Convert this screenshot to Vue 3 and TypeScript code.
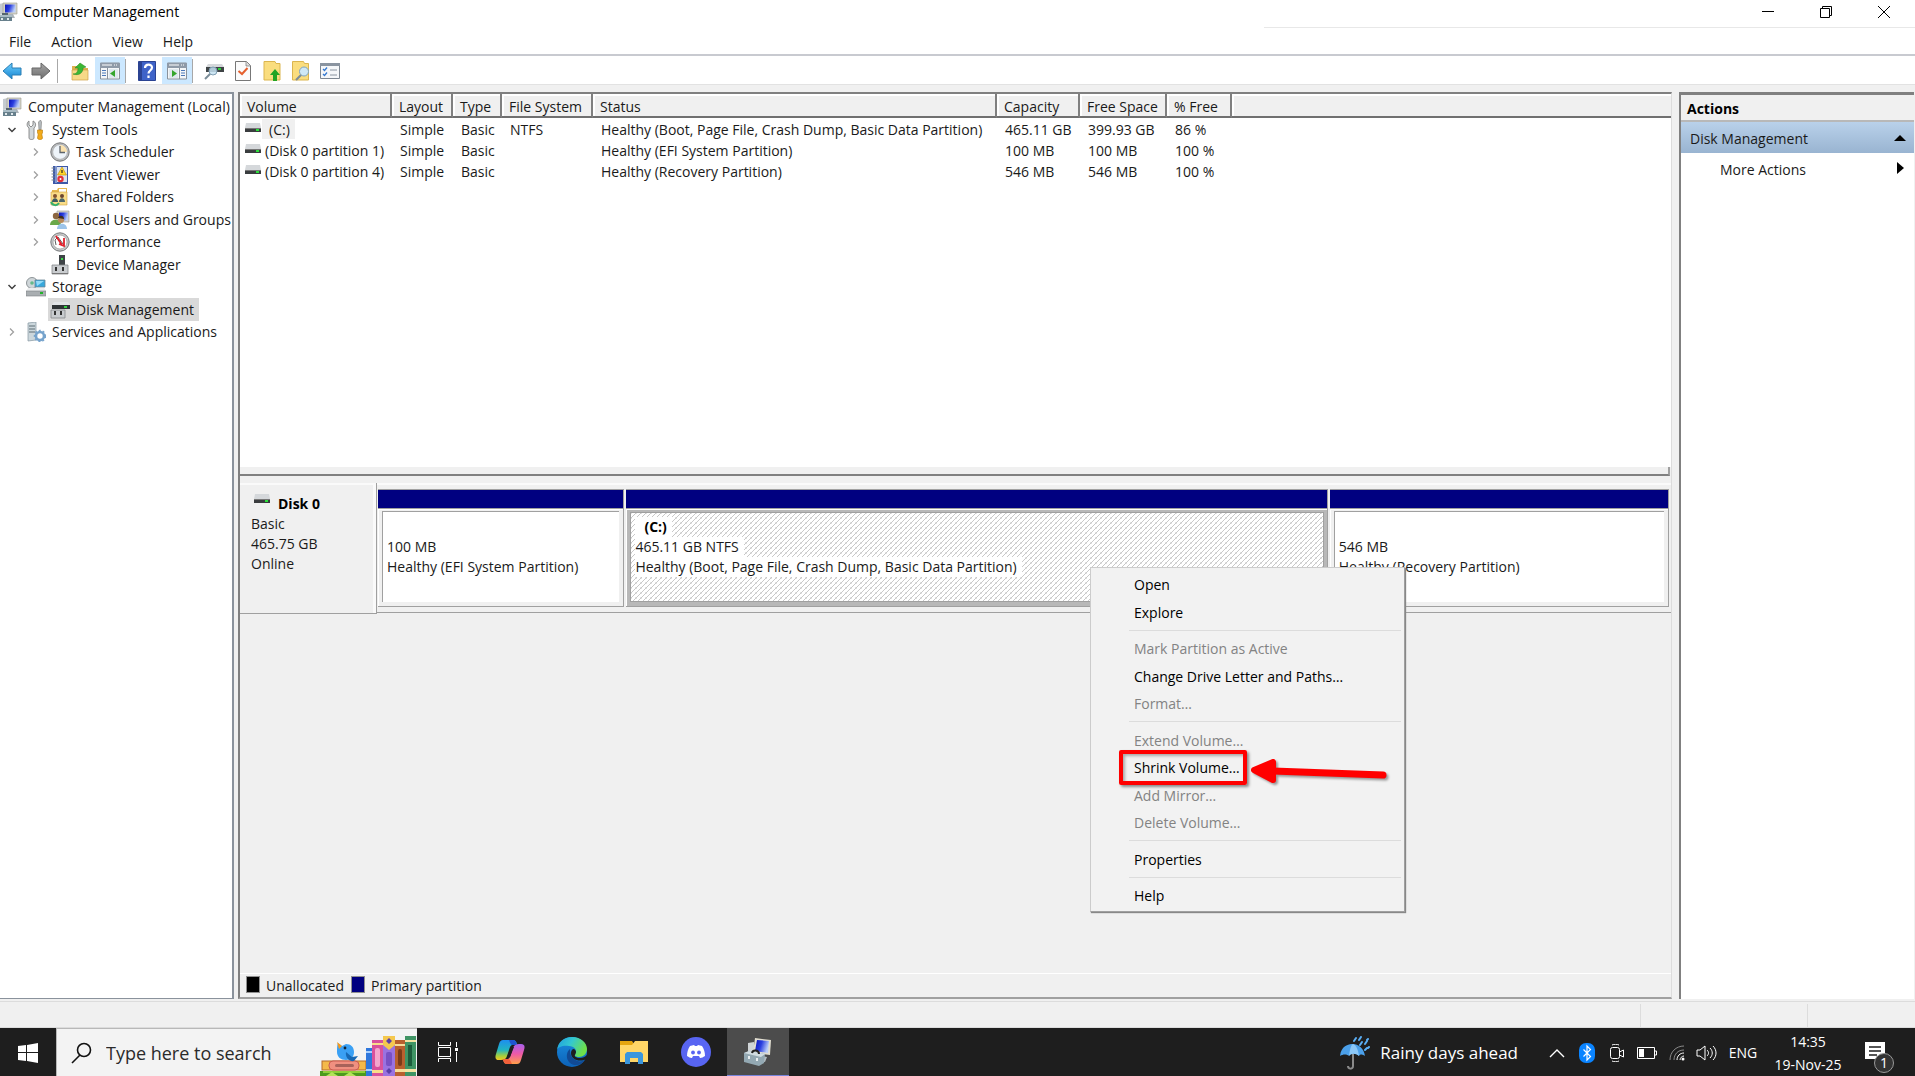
<script setup lang="ts">
interface TreeNode {
  label: string
  icon: string
  level: number
  state?: 'open' | 'closed'
  selected?: boolean
}

interface Volume {
  name: string
  layout: string
  type: string
  fs: string
  status: string
  capacity: string
  free: string
  percent: string
  selected?: boolean
}

interface MenuEntry {
  label: string
  disabled?: boolean
  separator?: boolean
  marked?: boolean
}

const menus = ['File', 'Action', 'View', 'Help']

const tree: TreeNode[] = [
  { label: 'Computer Management (Local)', icon: 'computer', level: 0 },
  { label: 'System Tools', icon: 'tools', level: 1, state: 'open' },
  { label: 'Task Scheduler', icon: 'clock', level: 2, state: 'closed' },
  { label: 'Event Viewer', icon: 'event', level: 2, state: 'closed' },
  { label: 'Shared Folders', icon: 'shared', level: 2, state: 'closed' },
  { label: 'Local Users and Groups', icon: 'users', level: 2, state: 'closed' },
  { label: 'Performance', icon: 'perf', level: 2, state: 'closed' },
  { label: 'Device Manager', icon: 'device', level: 2 },
  { label: 'Storage', icon: 'storage', level: 1, state: 'open' },
  { label: 'Disk Management', icon: 'diskmgmt', level: 2, selected: true },
  { label: 'Services and Applications', icon: 'services', level: 1, state: 'closed' },
]

const columns = ['Volume', 'Layout', 'Type', 'File System', 'Status', 'Capacity', 'Free Space', '% Free']

const volumes: Volume[] = [
  {
    name: '(C:)', layout: 'Simple', type: 'Basic', fs: 'NTFS',
    status: 'Healthy (Boot, Page File, Crash Dump, Basic Data Partition)',
    capacity: '465.11 GB', free: '399.93 GB', percent: '86 %', selected: true,
  },
  {
    name: '(Disk 0 partition 1)', layout: 'Simple', type: 'Basic', fs: '',
    status: 'Healthy (EFI System Partition)',
    capacity: '100 MB', free: '100 MB', percent: '100 %',
  },
  {
    name: '(Disk 0 partition 4)', layout: 'Simple', type: 'Basic', fs: '',
    status: 'Healthy (Recovery Partition)',
    capacity: '546 MB', free: '546 MB', percent: '100 %',
  },
]

const partitions = [
  { key: 'efi', title: '', size: '100 MB', status: 'Healthy (EFI System Partition)' },
  {
    key: 'main', title: '(C:)', size: '465.11 GB NTFS',
    status: 'Healthy (Boot, Page File, Crash Dump, Basic Data Partition)',
  },
  { key: 'recovery', title: '', size: '546 MB', status: 'Healthy (Recovery Partition)' },
]

const contextMenu: MenuEntry[] = [
  { label: 'Open' },
  { label: 'Explore' },
  { label: 'Mark Partition as Active', disabled: true, separator: true },
  { label: 'Change Drive Letter and Paths…' },
  { label: 'Format…', disabled: true },
  { label: 'Extend Volume…', disabled: true, separator: true },
  { label: 'Shrink Volume…', marked: true },
  { label: 'Add Mirror…', disabled: true },
  { label: 'Delete Volume…', disabled: true },
  { label: 'Properties', separator: true },
  { label: 'Help', separator: true },
]
</script>

<template>
  <div class="desktop">
    <svg class="sprite" aria-hidden="true">
      <defs>
        <linearGradient id="g-screen" x1="0" y1="0" x2="1" y2="0.3">
          <stop offset="0" stop-color="#0a14b8" /><stop offset="0.5" stop-color="#2a3fe0" /><stop offset="1" stop-color="#b9cdf8" />
        </linearGradient>
        <linearGradient id="g-blue" x1="0" y1="0" x2="0" y2="1">
          <stop offset="0" stop-color="#6fd0ff" /><stop offset="1" stop-color="#1583cf" />
        </linearGradient>
        <linearGradient id="g-gray" x1="0" y1="0" x2="0" y2="1">
          <stop offset="0" stop-color="#a5a5a5" /><stop offset="1" stop-color="#6e6e6e" />
        </linearGradient>
        <linearGradient id="g-edge" x1="0" y1="0" x2="1" y2="0.4">
          <stop offset="0" stop-color="#1d9be0" /><stop offset="0.5" stop-color="#34c8d0" /><stop offset="1" stop-color="#6ee04a" />
        </linearGradient>
        <linearGradient id="g-edge2" x1="0" y1="0" x2="0" y2="1">
          <stop offset="0" stop-color="#1b8fe0" /><stop offset="1" stop-color="#0c62b8" />
        </linearGradient>
        <linearGradient id="g-cop1" x1="0" y1="0" x2="0" y2="1">
          <stop offset="0" stop-color="#1d8ef0" /><stop offset="0.5" stop-color="#22b5c0" /><stop offset="0.8" stop-color="#a8cf3a" /><stop offset="1" stop-color="#f2c522" />
        </linearGradient>
        <linearGradient id="g-cop2" x1="0" y1="0" x2="0" y2="1">
          <stop offset="0" stop-color="#a860ee" /><stop offset="0.5" stop-color="#ee5aa6" /><stop offset="1" stop-color="#ffa04a" />
        </linearGradient>
      </defs>
      <symbol id="computer" viewBox="0 0 20 20">
        <path d="M1 2l6-1v11l-6 1z" fill="#c5cbd0" /><path d="M5 1h14v11H5z" fill="#d5d3c6" stroke="#9a9a92" stroke-width=".6" />
        <path d="M7 2.500h10.500v8H7z" fill="url(#g-screen)" /><path d="M9 12h6l2 4H8z" fill="#aab2b8" />
        <path d="M1 13h13v6H1z" fill="#67808c" /><path d="M1 13h13v2H1z" fill="#a9bcc5" />
        <path d="M4 11h6v2H4z" fill="#56666f" /><path d="M3 16h2v2H3zM9 16h2v2H9z" fill="#e0e8ec" />
      </symbol>
      <symbol id="tools" viewBox="0 0 20 20">
        <path d="M3 1v4l2 2 2-2V1c3 1 3.500 5 1 7v10c0 2-5 2-5 0V8C0 6 1 2 3 1z" fill="#d3d8da" stroke="#777" stroke-width=".8" />
        <path d="M12.500 2l2-2 1 2-.5 8h-2z" fill="#b7bdc0" stroke="#777" stroke-width=".6" />
        <path d="M11.500 10h5v3l-.7 1 .7 4c0 2-5 2-5 0l.7-4-.7-1z" fill="#f2ab1a" stroke="#b97908" stroke-width=".6" />
      </symbol>
      <symbol id="clock" viewBox="0 0 20 20">
        <circle cx="10" cy="10" r="9.200" fill="#b9bbbd" stroke="#77797b" /><circle cx="10" cy="10" r="7.200" fill="#eef4fa" stroke="#aaa" stroke-width=".5" />
        <path d="M10 10V3a7 7 0 0 1 7 7z" fill="#fbe2ae" /><path d="M10 4v6.500h5" fill="none" stroke="#5d646c" stroke-width="1.300" />
      </symbol>
      <symbol id="event" viewBox="0 0 20 20">
        <path d="M3 1h15v18H3z" fill="#3c58a8" /><path d="M5 2h12v15H5z" fill="#dbe3ef" /><path d="M5 1h2v17H5z" fill="#7e95cc" />
        <path d="M1.500 3h3M1.500 6h3M1.500 9h3M1.500 12h3M1.500 15h3" stroke="#7d868f" />
        <path d="M12 2l4.500 8h-9z" fill="#ffd52a" stroke="#ba8b00" stroke-width=".6" /><path d="M12 5v3" stroke="#222" stroke-width="1.200" />
        <circle cx="10.500" cy="14" r="3.200" fill="#e4303a" /><circle cx="10.500" cy="14" r="1" fill="#fff" />
      </symbol>
      <symbol id="shared" viewBox="0 0 20 20">
        <path d="M2 3h5l1-2h9v17H2z" fill="#e6b74e" /><path d="M9 2h7v4H9z" fill="#fff" /><path d="M1 5h16v13H1z" fill="#fadd88" stroke="#d2a340" stroke-width=".6" />
        <circle cx="5" cy="9" r="2" fill="#805231" /><path d="M2 15c0-5 6-5 6 0z" fill="#3f5b62" /><circle cx="12" cy="9" r="2" fill="#6b4630" /><path d="M9 15c0-5 6-5 6 0z" fill="#4d676b" />
        <path d="M1 15c2 4 6 4 8 1" fill="none" stroke="#36b06c" stroke-width="2" />
      </symbol>
      <symbol id="users" viewBox="0 0 20 20">
        <path d="M7 1h12v11H7z" fill="#d4d4cc" stroke="#999" stroke-width=".6" /><path d="M9 2.500h9v8H9z" fill="url(#g-screen)" />
        <circle cx="6" cy="6" r="3.200" fill="#8c6640" /><path d="M0 15c0-7 11-7 11 0z" fill="#6aa84a" />
        <circle cx="11" cy="10" r="3" fill="#b98a5a" /><path d="M8 8c1-3 6-3 6 1z" fill="#3c2c1e" /><path d="M7 19c0-7 10-7 10 0z" fill="#9cc4ea" />
      </symbol>
      <symbol id="perf" viewBox="0 0 20 20">
        <circle cx="10" cy="10" r="9.200" fill="#c7c9ca" stroke="#77797b" /><circle cx="10" cy="10" r="7" fill="#fff" stroke="#888" stroke-width=".6" />
        <path d="M6 13L5 8l3-3 5 7" fill="none" stroke="#333" stroke-width=".8" /><path d="M6 4l6 9M14 6v8l-5-2" stroke="#e0202c" stroke-width="1.800" fill="none" />
      </symbol>
      <symbol id="device" viewBox="0 0 20 20">
        <path d="M9 0h6v10H9z" fill="#3f4447" /><path d="M11 3h2v2h-2z" fill="#3fdc4a" /><path d="M2 10h16v9H2z" fill="#c9cccf" stroke="#85898c" stroke-width=".8" />
        <path d="M5 12h2v4H5zM12 12h2v4h-2z" fill="#333" /><path d="M2 18h16v1H2z" fill="#777" />
      </symbol>
      <symbol id="storage" viewBox="0 0 20 20">
        <circle cx="6" cy="6" r="5.500" fill="#cfd6d9" stroke="#8e9598" /><circle cx="6" cy="6" r="1.800" fill="#64b98a" /><path d="M9 3h10v7H9z" fill="#38a8dc" stroke="#6c8796" stroke-width=".8" /><path d="M10 4l8 0-7 5z" fill="#94dcf8" />
        <path d="M2 11h16l2 3H0z" fill="#eceeef" /><path d="M0 14h20v5H0z" fill="#a9aeb1" stroke="#7d8285" stroke-width=".6" /><path d="M14 15h3v2h-3z" fill="#24b32c" />
      </symbol>
      <symbol id="diskmgmt" viewBox="0 0 20 20">
        <path d="M4 2h14l2 3H2z" fill="#e2e4e6" /><path d="M2 5h18v4H2z" fill="#2f3335" /><path d="M14 6h3v2h-3z" fill="#35d042" />
        <path d="M1 10h14v8H1z" fill="#c9cccf" stroke="#85898c" stroke-width=".8" /><path d="M4 11h2v4H4zM10 11h2v4h-2z" fill="#333" />
      </symbol>
      <symbol id="services" viewBox="0 0 20 20">
        <path d="M2 1l8-1v18l-8 1z" fill="#ccd7dc" stroke="#8597a0" stroke-width=".7" /><path d="M3 4h6M3 7h6M3 10h6" stroke="#5d6c74" />
        <circle cx="14" cy="14" r="4" fill="none" stroke="#76a3cc" stroke-width="2.600" /><circle cx="14" cy="14" r="5.500" fill="none" stroke="#76a3cc" stroke-width="1.500" stroke-dasharray="2 2" />
      </symbol>
      <symbol id="drive" viewBox="0 0 18 10">
        <path d="M2 0h14l1 5H1z" fill="#d5d8db" /><path d="M1 5h16v4H1z" fill="#3a3d3f" /><path d="M1 5h16v1H1z" fill="#777" /><path d="M12 6h3v2h-3z" fill="#2be03a" />
      </symbol>
      <symbol id="back" viewBox="0 0 20 18"><path d="M1 9l9-8v5h9v7h-9v4z" fill="url(#g-blue)" stroke="#2a7eb4" /></symbol>
      <symbol id="forward" viewBox="0 0 20 18"><path d="M19 9l-9-8v5H1v7h9v4z" fill="url(#g-gray)" stroke="#666" /></symbol>
      <symbol id="folderup" viewBox="0 0 20 20">
        <path d="M2 5h7l2 2h7v12H2z" fill="#dcb04f" /><path d="M2 9h16v10H2z" fill="#f7d987" stroke="#cfa245" stroke-width=".7" />
        <path d="M3 13c4 0 5-3 5-6H5l5-5 6 4-3 1c0 5-4 8-10 6z" fill="#3ab834" stroke="#24831f" stroke-width=".5" />
      </symbol>
      <symbol id="winleft" viewBox="0 0 20 18">
        <path d="M.5 1h19v16H.5z" fill="#f4f6f8" stroke="#8a929b" /><path d="M0 1h20v5H0z" fill="#8f9aa8" /><path d="M2 3h10" stroke="#fff" /><path d="M14 3h4" stroke="#fff" stroke-dasharray="1 1" />
        <path d="M2 8.500h4M2 11h4M2 13.500h4" stroke="#4c78b8" /><path d="M7.500 6v11" stroke="#8a929b" /><path d="M9 7h9v9H9z" fill="#dfe8ee" /><path d="M15 8v7l-5-3.500z" fill="#35a62d" />
      </symbol>
      <symbol id="winright" viewBox="0 0 20 18">
        <path d="M.5 1h19v16H.5z" fill="#f4f6f8" stroke="#8a929b" /><path d="M0 1h20v5H0z" fill="#8f9aa8" /><path d="M2 3h10" stroke="#fff" /><path d="M14 3h4" stroke="#fff" stroke-dasharray="1 1" />
        <path d="M14 8.500h4M14 11h4M14 13.500h4" stroke="#4c78b8" /><path d="M12.500 6v11" stroke="#8a929b" /><path d="M2 7h9v9H2z" fill="#dfe8ee" /><path d="M5 8v7l5-3.500z" fill="#35a62d" />
      </symbol>
      <symbol id="help" viewBox="0 0 18 20">
        <path d="M.5.5h17v19H.5z" fill="#3f63c8" stroke="#2b4392" /><path d="M1 1h3v18H1z" fill="#2b4392" />
        <path d="M7 7c0-4.500 7-4.500 7-.5 0 3-3.500 3-3.500 6M10.500 14.500v2.500" fill="none" stroke="#fff" stroke-width="2.200" />
      </symbol>
      <symbol id="disksearch" viewBox="0 0 20 18">
        <path d="M4 2h14l2 3H2z" fill="#d5d8db" /><path d="M2 5h18v5H2z" fill="#3f4446" /><path d="M14 6h3v2h-3z" fill="#2bd03a" />
        <circle cx="9" cy="9" r="4" fill="#c6e2f2" fill-opacity=".85" stroke="#81a0b4" /><path d="M6 12l-5 5" stroke="#7a8c98" stroke-width="2" />
      </symbol>
      <symbol id="check" viewBox="0 0 16 20">
        <path d="M.5.500h11l4 4v15H.5z" fill="#fbfbfb" stroke="#777" /><path d="M11 .5v4.500h4.500" fill="#ddd" stroke="#777" stroke-width=".7" /><path d="M3.500 10l3.500 3 5.500-6" fill="none" stroke="#e5602f" stroke-width="2" />
      </symbol>
      <symbol id="fup" viewBox="0 0 17 20"><path d="M.5.500h11l1 2h4v16.500H.5z" fill="#fadd7e" stroke="#dbb54f" /><path d="M11.500 8l5 6h-3v6h-4v-6h-3z" fill="#23a424" /></symbol>
      <symbol id="fsearch" viewBox="0 0 18 20">
        <path d="M.5.500h11l1 2h4v16.500H.5z" fill="#fadd7e" stroke="#dbb54f" /><circle cx="12" cy="10.500" r="4.500" fill="#cfe8f6" stroke="#7fa4bd" /><path d="M9 14l-5 5" stroke="#7d8d98" stroke-width="2.200" />
      </symbol>
      <symbol id="list" viewBox="0 0 20 16">
        <path d="M.5.500h19v15H.5z" fill="#f5f7f9" stroke="#7d8792" /><path d="M0 0h20v3H0z" fill="#8a94a0" /><path d="M3 6l1.500 1.500L7 4.500M3 11l1.500 1.500L7 9.500" fill="none" stroke="#3478d0" stroke-width="1.300" />
        <path d="M10 7h7M10 12h7" stroke="#8a94a0" />
      </symbol>
    </svg>

    <header class="titlebar">
      <svg class="i20"><use href="#computer" /></svg>
      <h1>Computer Management</h1>
      <div class="winbtns">
        <button aria-label="Minimize"><svg width="12" height="12"><path d="M0 5.500h12" stroke="#000" /></svg></button>
        <button aria-label="Restore"><svg width="12" height="12"><path d="M.5 2.500h9v9h-9zM2.500 2.500v-2h9v9h-2" fill="none" stroke="#000" /></svg></button>
        <button aria-label="Close"><svg width="12" height="12"><path d="M0 0l12 12M12 0L0 12" stroke="#000" /></svg></button>
      </div>
    </header>

    <nav class="menubar">
      <button v-for="m in menus" :key="m">{{ m }}</button>
    </nav>

    <div class="toolbar" role="toolbar">
      <button class="nav" aria-label="Back"><svg class="t20"><use href="#back" /></svg></button>
      <button class="nav" aria-label="Forward"><svg class="t20"><use href="#forward" /></svg></button>
      <i class="rule"></i>
      <button aria-label="Up one level"><svg class="i20"><use href="#folderup" /></svg></button>
      <button class="on" aria-label="Show console tree"><svg class="t20"><use href="#winleft" /></svg></button>
      <i class="rule tight"></i>
      <button aria-label="Help"><svg class="i20"><use href="#help" /></svg></button>
      <button class="on" aria-label="Show action pane"><svg class="t20"><use href="#winright" /></svg></button>
      <i class="rule tight"></i>
      <button class="slim" aria-label="Refresh disks"><svg class="t20"><use href="#disksearch" /></svg></button>
      <button class="slim" aria-label="Properties"><svg class="i20"><use href="#check" /></svg></button>
      <button class="slim" aria-label="Open folder"><svg class="i20"><use href="#fup" /></svg></button>
      <button class="slim" aria-label="Find"><svg class="i20"><use href="#fsearch" /></svg></button>
      <button class="slim" aria-label="Settings"><svg class="t16"><use href="#list" /></svg></button>
    </div>

    <main class="panes">
      <aside class="tree">
        <ul>
          <li v-for="n in tree" :key="n.label" :class="'level' + n.level">
            <svg v-if="n.level" class="twisty" viewBox="0 0 16 16">
              <path v-if="n.state === 'open'" d="M4.500 6l3.500 3.500L11.500 6" stroke="#404040" stroke-width="1.500" fill="none" />
              <path v-else-if="n.state" d="M6 4.500L9.500 8 6 11.500" stroke="#a0a0a0" stroke-width="1.300" fill="none" />
            </svg>
            <span class="node" :class="{ selected: n.selected }">
              <svg class="i20"><use :href="'#' + n.icon" /></svg>{{ n.label }}
            </span>
          </li>
        </ul>
      </aside>

      <section class="center">
        <div class="list">
          <table>
            <colgroup>
              <col class="c-vol" /><col class="c-lay" /><col class="c-type" /><col class="c-fs" />
              <col class="c-stat" /><col class="c-cap" /><col class="c-free" /><col class="c-pct" /><col />
            </colgroup>
            <thead>
              <tr><th v-for="c in columns" :key="c">{{ c }}</th><th></th></tr>
            </thead>
            <tbody>
              <tr v-for="v in volumes" :key="v.name">
                <td class="vol"><svg class="drv"><use href="#drive" /></svg><span :class="{ picked: v.selected }">{{ v.name }}</span></td>
                <td>{{ v.layout }}</td><td>{{ v.type }}</td><td>{{ v.fs }}</td><td>{{ v.status }}</td>
                <td>{{ v.capacity }}</td><td>{{ v.free }}</td><td>{{ v.percent }}</td><td></td>
              </tr>
            </tbody>
          </table>
        </div>
        <div class="splitter"></div>

        <div class="graph">
          <div class="disk">
            <div class="diskinfo">
              <strong><svg class="drv"><use href="#drive" /></svg>Disk 0</strong>
              <span>Basic</span><span>465.75 GB</span><span>Online</span>
            </div>
            <div class="parts">
              <div v-for="p in partitions" :key="p.key" class="part" :class="p.key">
                <div class="bar"></div>
                <div class="frame">
                  <div class="body">
                    <strong>{{ p.title }}</strong>
                    <span>{{ p.size }}</span>
                    <span>{{ p.status }}</span>
                  </div>
                </div>
              </div>
            </div>
          </div>
        </div>

        <footer class="legend">
          <i class="swatch black"></i><span>Unallocated</span>
          <i class="swatch navy"></i><span>Primary partition</span>
        </footer>
      </section>

      <aside class="actions">
        <h2>Actions</h2>
        <button class="group">Disk Management<svg width="12" height="7"><path d="M0 7l6-6 6 6z" /></svg></button>
        <button class="more">More Actions<svg width="7" height="12"><path d="M0 0l7 6-7 6z" /></svg></button>
      </aside>
    </main>

    <div class="statusbar"><i></i><i></i></div>

    <div class="context" role="menu">
      <template v-for="e in contextMenu" :key="e.label">
        <hr v-if="e.separator" />
        <button role="menuitem" :disabled="e.disabled">
          {{ e.label }}
          <span v-if="e.marked" class="marker"></span>
          <svg v-if="e.marked" class="arrow" viewBox="0 0 146 34">
            <path d="M24 16l110 4" stroke="#f00" stroke-width="7" stroke-linecap="round" />
            <path d="M5 15L24 7v18z" fill="#f00" stroke="#f00" stroke-width="6" stroke-linejoin="round" />
          </svg>
        </button>
      </template>
    </div>

    <footer class="taskbar">
      <button class="start" aria-label="Start">
        <svg width="20" height="20"><path d="M0 3l8-1v7H0zM9 2l11-2v9H9zM0 10h8v8l-8-1zM9 10h11v10L9 18z" fill="#fff" /></svg>
      </button>
      <label class="search">
        <svg width="22" height="22"><circle cx="13" cy="8" r="6.500" fill="none" stroke="#111" stroke-width="1.600" /><path d="M9 13l-8 8" stroke="#111" stroke-width="1.600" /></svg>
        <input type="text" placeholder="Type here to search" aria-label="Type here to search" />
        <svg class="books" viewBox="0 0 96 41">
          <path d="M0 36h48v5H0z" fill="#4c9a1e" /><path d="M3 36h42v2H3z" fill="#8fd038" /><path d="M6 41l6-4 6 4zM24 41l6-4 6 4z" fill="#b4e35a" />
          <rect x="2" y="26" width="44" height="9" fill="#f4b94a" stroke="#b46a2a" /><rect x="9" y="26" width="30" height="9" rx="4" fill="#f09080" stroke="#c95b50" /><rect x="15" y="29" width="19" height="3" rx="1.500" fill="#a8625a" />
          <path d="M18 8l4 3 4-2c5 0 8 3 8 8 0 5-3 8-8 8s-9-3-9-8c0-4 0-6 1-9z" fill="#3aa0f4" /><path d="M17 7l5 4-3 3z" fill="#f79a1c" /><path d="M26 17l6 5 6-1-4 5c-5 1-9-4-8-9z" fill="#1768b4" /><circle cx="25" cy="13" r="1.400" fill="#123" />
          <path d="M46 13h6v28h-6z" fill="#2f77dc" /><path d="M46 16h6v2h-6zM46 34h6v2h-6z" fill="#a8d0ff" />
          <path d="M52 5h11v36H52z" fill="#d8519c" /><path d="M52 8h11v2H52zM52 35h11v3H52z" fill="#f9dc8a" /><rect x="55" y="13" width="5" height="19" rx="2" fill="#f4a6cc" />
          <path d="M63 1h12v40H63z" fill="#9a72e0" /><path d="M63 1h12v9l-6 5-6-5z" fill="#f5c84e" /><path d="M69 3l3 3-3 3-3-3zM69 33l3 3-3 3-3-3z" fill="#5a3fa8" /><rect x="66" y="17" width="6" height="14" rx="2" fill="#7850c4" />
          <path d="M75 5h10v36H75z" fill="#b8602e" /><path d="M75 9h10v2H75zM75 34h10v3H75z" fill="#f6dc98" /><rect x="78" y="14" width="4" height="17" rx="2" fill="#7c3b18" />
          <path d="M85 1h11v40H85z" fill="#3f9464" /><path d="M85 5h11v2H85zM85 34h11v3H85z" fill="#f4e3a0" /><rect x="88" y="10" width="4" height="21" fill="#1d5c3c" />
        </svg>
      </label>
      <button class="app" aria-label="Task view">
        <svg width="20" height="20" fill="none" stroke="#fff"><path d="M.5 0v3.500h12V0M.5 20v-3.500h12V20M.5 5.500h12v9H.5zM18.500 0v5M18.500 10v10" /><path d="M17 6h3v3h-3z" fill="#fff" stroke="none" /></svg>
      </button>
      <button class="app" aria-label="Copilot">
        <svg width="30" height="26" viewBox="0 0 30 26">
          <path d="M8 1h10c2 0 3 1 4 4l-5 1c-2 1-2 2-3 5l-2 6c-1 3-3 4-6 4H4c-4 0-4-3-3-6L4 5c1-3 2-4 4-4z" fill="url(#g-cop1)" />
          <path d="M13 1h5c2 0 3 1 4 5h-3c-3 0-3 0-5-5z" fill="#1f55d0" />
          <path d="M22 25H12c-2 0-3-1-4-4l5-1c2-1 2-2 3-5l2-6c1-3 3-4 6-4h2c4 0 4 3 3 6l-3 10c-1 3-2 4-4 4z" fill="url(#g-cop2)" />
          <path d="M8 20h4c3 0 3 1 5 5h-5c-2 0-3-1-4-5z" fill="#f2603a" />
          <path d="M16 8h3l-4 10h-3z" fill="#1e1e1e" />
        </svg>
      </button>
      <button class="app" aria-label="Edge">
        <svg width="30" height="30" viewBox="0 0 30 30">
          <circle cx="15" cy="15" r="15" fill="url(#g-edge2)" />
          <path d="M0 13C1 5 7 0 15 0c9 0 15 6 15 12 0 5-4 8-8 8-3 0-5-1-4-3 3-4-1-8-6-8C6 8 1 10 0 13z" fill="url(#g-edge)" />
          <path d="M13 12c-6 5-3 16 6 16 4 0 7-2 9-5-3 2-8 2-11-1-3-2-4-5-4-10z" fill="#114a94" />
          <path d="M17 12c3 2 2 4 1 6-1 1 1 3 5 3 3 0 5-1 7-3v4l-3 1c-6 2-13-1-13-7 0-2 1-4 3-4z" fill="#1e1e1e" />
        </svg>
      </button>
      <button class="app" aria-label="File Explorer">
        <svg width="28" height="24" viewBox="0 0 28 24"><path d="M0 1h12l2 3h14v18H0z" fill="#e5a50e" /><path d="M0 5h12l3-4h13v21H0z" fill="#ffd667" /><path d="M5 24V14l2-2h14l2 2v10h-5v-6h-8v6z" fill="#3a96dd" /></svg>
      </button>
      <button class="app" aria-label="Discord">
        <svg width="30" height="30" viewBox="0 0 30 30"><circle cx="15" cy="15" r="15" fill="#5865f2" /><path d="M9 9l4-1 1 1h2l1-1 4 1c2 3 3 6 3 10-2 1-3 2-5 2l-1-2h-6l-1 2c-2 0-3-1-5-2 0-4 1-7 3-10z" fill="#fff" /><circle cx="12" cy="15.500" r="1.900" fill="#5865f2" /><circle cx="18" cy="15.500" r="1.900" fill="#5865f2" /></svg>
      </button>
      <button class="app active" aria-label="Computer Management">
        <svg width="30" height="28" viewBox="0 0 30 28">
          <path d="M5 5l6-1v12l-6-2z" fill="#cfd4d6" /><path d="M12 0l16 2-1 15-17-2z" fill="#e0ddd0" /><path d="M14 2l12 1-1 12-13-2z" fill="url(#g-screen)" />
          <path d="M14 17l10 2-2 5-9-2z" fill="#b5bfc4" /><path d="M1 15l5-2 16 3-1 9-5 3-15-4z" fill="#93a8b2" /><path d="M1 15l5-2 16 3-4 3z" fill="#d0dce1" /><path d="M9 15c1-4 7-3 7 1" stroke="#222" stroke-width="2" fill="none" /><path d="M5 18h2v3H5zM13 20h2v3h-2z" fill="#e8eef0" />
        </svg>
      </button>

      <div class="tray">
        <button class="weather">
          <svg width="30" height="34" viewBox="0 0 30 34"><path d="M0 20C1 10 8 8 13 8s11 4 12 12c-3-2-5-2-6 0-3-3-8-3-10 0-2-2-6-2-9 0z" fill="#4ba0ea" /><path d="M9 20c1-7 2-11 4-12 3 1 5 5 6 12-3-3-8-3-10 0z" fill="#8cc8f8" /><path d="M13 18v12c0 4-5 3-5 0" fill="none" stroke="#8a8a8a" stroke-width="2" /><path d="M14 5l2-3M19 4l2-3M20 9l2-3M25 8l2-3M25 14l2-2M28 3l-1 1M29 11l-1 1" stroke="#5aaef4" stroke-width="2" stroke-linecap="round" /></svg>
          Rainy days ahead
        </button>
        <button class="t chev" aria-label="Hidden icons"><svg width="16" height="10"><path d="M1 9l7-7 7 7" fill="none" stroke="#fff" stroke-width="1.400" /></svg></button>
        <button class="t bt" aria-label="Bluetooth"><svg width="16" height="20"><rect width="16" height="20" rx="7" fill="#0a84ff" /><path d="M4.500 6.500l7 7L8 17V3l3.500 3.500-7 7" fill="none" stroke="#fff" stroke-width="1.200" /></svg></button>
        <button class="t" aria-label="Camera"><svg width="16" height="18" fill="none" stroke="#fff"><rect x="1.500" y="3.500" width="9" height="11" rx="2" /><path d="M10.500 8l4-2v7l-4-2M3 1c2-1 5-1 7 0M3 17c2 1 5 1 7 0" /></svg></button>
        <button class="t" aria-label="Battery"><svg width="20" height="12" fill="none" stroke="#fff"><path d="M.5.500h17v11H.5zM18 4h1.500v4H18" /><path d="M2 2h5v8H2z" fill="#fff" stroke="none" /></svg></button>
        <button class="t" aria-label="Network"><svg width="16" height="16" fill="none"><path d="M1 15C1 7 7 1 15 1M5 15C5 9 9 5 15 5" stroke="#8a8a8a" /><path d="M8 15c0-4 3-7 7-7M11 15c0-2 2-4 4-4" stroke="#fff" /><circle cx="14" cy="14" r="1.500" fill="#fff" /></svg></button>
        <button class="t" aria-label="Volume"><svg width="22" height="18" fill="none" stroke="#fff"><path d="M1 6h3l5-4v14l-5-4H1zM11 6c2 2 2 4 0 6M14 4c3 3 3 7 0 10M17 2c4 4 4 10 0 14" /></svg></button>
        <button class="lang">ENG</button>
        <button class="clockbox"><span>14:35</span><span>19-Nov-25</span></button>
        <button class="notes" aria-label="Notifications">
          <svg width="20" height="22"><path d="M0 0h20v17h-6l-3 4v-4H0z" fill="#fff" /><path d="M4 5h12M4 9h12M4 13h8" stroke="#1e1e1e" stroke-width="1.500" /></svg>
          <span>1</span>
        </button>
      </div>
    </footer>
  </div>
</template>

<style>
body {
  margin: 0;
  overflow: hidden;
}
</style>

<style scoped>
* {
  box-sizing: border-box;
}
.desktop {
  position: relative;
  display: flex;
  flex-direction: column;
  height: 100vh;
  background: #f0f0f0;
  color: #1a1a1a;
  font: 14px/20px "Open Sans", "Noto Sans", sans-serif;
  white-space: nowrap;
}
.sprite {
  position: absolute;
  width: 0;
  height: 0;
}
button {
  margin: 0;
  padding: 0;
  border: 0;
  background: none;
  color: inherit;
  font: inherit;
}
svg {
  flex: none;
}
.i20 {
  width: 20px;
  height: 20px;
}
.t20 {
  width: 20px;
  height: 18px;
}
.t16 {
  width: 20px;
  height: 16px;
}
.drv {
  width: 18px;
  height: 10px;
}

.titlebar {
  display: flex;
  height: 28px;
  padding-bottom: 4px;
  align-items: center;
  background: linear-gradient(90deg, #fff 66%, #e8e8e8 66%) 0 100% / 100% 1px no-repeat #fff;
}
.titlebar .i20 {
  margin-left: -2px;
}
h1 {
  margin: 0 0 0 5px;
  color: #000;
  font-size: 14px;
  font-weight: 400;
}
.winbtns {
  display: flex;
  margin-left: auto;
  padding-right: 2px;
}
.winbtns button {
  display: flex;
  width: 58px;
  height: 22px;
  align-items: center;
  justify-content: center;
}
.menubar {
  display: flex;
  height: 28px;
  padding-left: 9px;
  gap: 20px;
  background: #fff;
  border-bottom: 2px solid #c8cad0;
}
.menubar button {
  height: 26px;
  line-height: 28px;
}
.toolbar {
  display: flex;
  height: 29px;
  padding-top: 1px;
  align-items: center;
  background: #fff;
  border-bottom: 1px solid #e2e2e2;
}
.toolbar button {
  display: flex;
  width: 30px;
  height: 27px;
  align-items: center;
  justify-content: center;
}
.toolbar .nav {
  width: 24px;
}
.toolbar .nav + .nav {
  margin-left: 5px;
}
.toolbar .slim {
  width: 29px;
}
.toolbar .on {
  background: #cce8ff;
}
.rule {
  width: 1px;
  height: 24px;
  margin: 0 7px 0 4px;
  background: #a8a8a8;
}
.rule.tight {
  margin: 0 6px 0 0;
}

.panes {
  display: flex;
  flex: 1;
  min-height: 0;
  padding: 7px 1px 2px 0;
}
.tree {
  width: 234px;
  margin-right: 4px;
  background: #fff;
  border: solid #8a929c;
  border-width: 2px 2px 1px 0;
}
ul {
  margin: 0;
  padding: 2px 0 0;
  list-style: none;
}
li {
  display: flex;
  height: 22px;
  align-items: center;
}
li:nth-child(even) {
  height: 23px;
}
.level1 {
  padding-left: 4px;
}
.level2 {
  padding-left: 28px;
}
.twisty {
  width: 16px;
  height: 16px;
  margin-right: 4px;
}
.node {
  display: flex;
  height: 100%;
  padding: 0 5px 0 2px;
  gap: 6px;
  align-items: center;
}
.selected {
  background: #d9d9d9;
}

.center {
  display: flex;
  flex: 1;
  min-width: 0;
  flex-direction: column;
  border: solid #808080;
  border-width: 2px 1px 2px 2px;
  border-right-color: #dcdcdc;
  border-bottom-color: #a0a0a0;
}
.list {
  flex: none;
  height: 373px;
  background: #fff;
}
table {
  width: 100%;
  table-layout: fixed;
  border-spacing: 0;
}
.c-vol { width: 152px; }
.c-lay { width: 61px; }
.c-type { width: 49px; }
.c-fs { width: 91px; }
.c-stat { width: 404px; }
.c-cap { width: 83px; }
.c-free { width: 87px; }
.c-pct { width: 65px; }
th {
  height: 24px;
  padding: 4px 0 0 7px;
  background: #f0f0f0;
  border-right: 2px solid #808080;
  border-bottom: 2px solid #707070;
  box-shadow: inset 2px 2px #fff;
  font-weight: 400;
  line-height: 18px;
  text-align: left;
}
th:last-child {
  border-right: 0;
}
td {
  height: 21px;
  padding: 3px 0 0 8px;
  line-height: 18px;
}
.vol {
  display: flex;
  height: 21px;
  padding: 1px 0 0 4px;
}
.vol .drv {
  margin-top: 4px;
}
.vol span {
  padding: 2px 0 0 3px;
}
.vol .picked {
  padding: 2px 5px 0 7px;
  background: #f0f0f0;
}
.splitter {
  flex: none;
  height: 9px;
  margin-right: 1px;
  background: #f0f0f0;
  border-bottom: 2px solid #808080;
  border-right: 2px solid #a0a0a0;
}
.graph {
  flex: 1;
  padding-top: 7px;
}
.disk {
  display: flex;
  height: 131px;
}
.diskinfo {
  display: flex;
  width: 137px;
  flex-direction: column;
  padding: 11px 0 0 11px;
  border: solid #a0a0a0;
  border-width: 0 1px 1px 0;
  box-shadow: inset -3px 2px #fafafa;
}
.diskinfo strong {
  display: flex;
  height: 20px;
  gap: 7px;
  color: #000;
}
.diskinfo .drv {
  margin-left: 2px;
}
.parts {
  display: flex;
  flex: 1;
  height: 130px;
  padding: 4px 2px 5px 1px;
  gap: 2px;
  border-bottom: 1px solid #a0a0a0;
  border-top: 2px solid #fafafa;
}
.part {
  display: flex;
  flex: 247 1 0;
  min-width: 0;
  flex-direction: column;
}
.part.main {
  flex-grow: 703;
}
.part.recovery {
  flex-grow: 340;
}
.bar {
  height: 19px;
  background: #000080;
  border: solid #a0a0a0;
  border-width: 1px 1px 0 0;
}
.frame {
  display: flex;
  flex: 1;
  padding: 2px 4px 4px;
  border: solid #a0a0a0;
  border-width: 1px 1px 1px 0;
  box-shadow: inset 1px 1px #fff;
}
.main .frame {
  padding: 3px 3px 4px 4px;
  background: #b8b8b8;
}
.body {
  display: flex;
  flex: 1;
  flex-direction: column;
  align-items: flex-start;
  padding: 5px 0 0 4px;
  background: #fff;
  border: solid #a0a0a0;
  border-width: 1px 0 0 1px;
}
.body strong {
  height: 20px;
  color: #000;
}
.main .body {
  padding: 4px 0 0 4px;
  border-width: 1px;
  background: linear-gradient(135deg, #c8c8c8 8%, #fff 12% 42%, #c8c8c8 46% 54%, #fff 58% 88%, #c8c8c8 92%) 0 0 / 5px 5px;
}
.main .body strong {
  padding: 0 5px 0 9px;
}
.main .body > * {
  background: #fff;
}
.main .body span {
  padding-right: 5px;
}
.legend {
  display: flex;
  height: 24px;
  padding-left: 6px;
  align-items: center;
  border-top: 1px solid #fff;
}
.legend span {
  margin: 0 7px 0 6px;
}
.swatch {
  width: 14px;
  height: 17px;
  margin-top: -2px;
  border: 1px solid #909090;
}
.black { background: #000; }
.navy { background: #000080; }

.actions {
  display: flex;
  width: 235px;
  margin-left: 7px;
  flex-direction: column;
  background: #fff;
  border: solid #808080;
  border-width: 3px 0 0 2px;
}
h2 {
  height: 27px;
  margin: 0;
  padding-left: 6px;
  background: #f0f0f0;
  border-bottom: 2px solid #b8b8b8;
  color: #000;
  font-size: 14px;
  font-weight: 700;
  line-height: 28px;
}
.actions button {
  display: flex;
  align-items: center;
  justify-content: space-between;
}
.actions .group {
  height: 31px;
  padding: 3px 8px 0 9px;
  background: linear-gradient(#b9d1ea, #99b4d1);
}
.actions .group svg {
  margin-top: -4px;
}
.actions .more {
  height: 31px;
  padding: 2px 10px 0 39px;
}
.actions .more svg {
  margin-top: -4px;
}
.statusbar {
  display: flex;
  height: 27px;
  justify-content: flex-end;
  border: solid #dcdcdc;
  border-width: 1px 0;
}
.statusbar i {
  width: 167px;
  margin-top: 2px;
  border-left: 1px solid #dcdcdc;
}
.statusbar i:last-child {
  width: 108px;
}

.context {
  position: absolute;
  top: 567px;
  left: 1090px;
  display: flex;
  width: 315px;
  flex-direction: column;
  padding: 3px 3px 2px;
  background: #f2f2f2;
  border: 1px solid #ccc;
  border-right-color: #a0a0a0;
  border-bottom-color: #a0a0a0;
  box-shadow: 1px 1px 1px #888;
  color: #000;
}
.context button {
  position: relative;
  height: 27px;
  padding-left: 40px;
  line-height: 27px;
  text-align: left;
}
.context button:nth-of-type(even) {
  height: 28px;
}
.context button:disabled {
  color: #838383;
}
.context hr {
  width: 272px;
  height: 1px;
  margin: 4px 0 4px 35px;
  border: 0;
  background: #dcdcdc;
}
.marker {
  position: absolute;
  top: -4px;
  left: 25px;
  width: 128px;
  height: 35px;
  border: 4px solid #f00;
  border-radius: 2px;
  box-shadow: 2px 2px 3px #888, inset 2px 2px 3px #aaa;
}
.arrow {
  position: absolute;
  top: 1px;
  left: 155px;
  width: 146px;
  height: 34px;
  filter: drop-shadow(2px 2px 1px #999);
}

.taskbar {
  display: flex;
  height: 48px;
  background: #1e1e1e;
  color: #fff;
}
.taskbar button {
  display: flex;
  align-items: center;
  justify-content: center;
}
.start {
  width: 56px;
  padding: 2px 0 0 0;
}
.search {
  display: flex;
  width: 361px;
  padding-left: 14px;
  background: #f3f3f3;
  border: solid #b8b8b8;
  border-width: 1px 0 0 1px;
  align-items: center;
}
.search input {
  width: 214px;
  padding: 0;
  margin-left: 13px;
  border: 0;
  outline: 0;
  background: none;
  font: 18px/24px "Open Sans", "Noto Sans", sans-serif;
}
.search input::placeholder {
  color: #2a2a2a;
  opacity: 1;
}
.books {
  width: 96px;
  height: 41px;
  align-self: flex-end;
}
.app {
  width: 62px;
}
.app.active {
  background: #4c4c4c;
  border-bottom: 1px solid #7884dc;
}
.tray {
  display: flex;
  margin-left: auto;
  padding-right: 17px;
}
.tray button {
  padding-top: 2px;
}
.tray .weather {
  gap: 10px;
  padding-right: 24px;
  font-size: 17px;
}
.t {
  width: 30px;
}
.lang {
  width: 42px;
}
.tray .clockbox {
  width: 88px;
  flex-direction: column;
  line-height: 23px;
}
.notes {
  position: relative;
  width: 46px;
}
.notes span {
  position: absolute;
  right: 4px;
  bottom: 3px;
  width: 20px;
  height: 20px;
  background: #333;
  border: 1px solid #999;
  border-radius: 50%;
  line-height: 18px;
}
</style>
